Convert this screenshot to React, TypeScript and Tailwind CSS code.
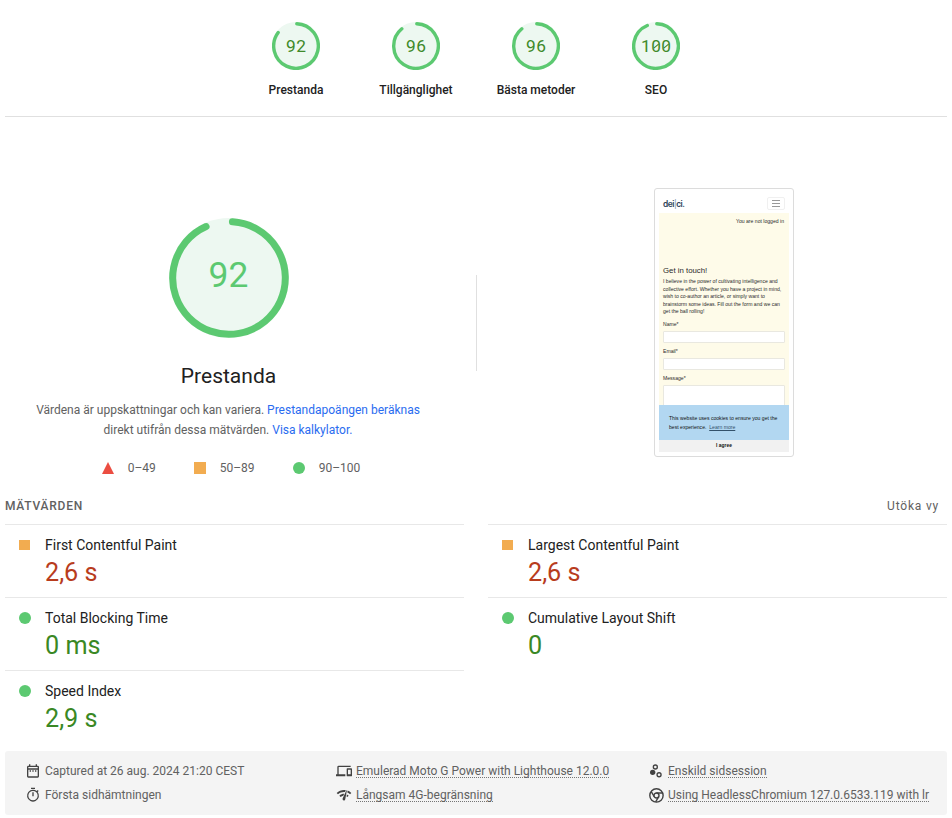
import React from "react";

const GREEN = "#5cc971";

type Arc = { size: number; r: number; stroke: number; start: number; end: number };

function point(c: number, r: number, deg: number) {
  const a = ((deg - 90) * Math.PI) / 180;
  return `${(c + r * Math.cos(a)).toFixed(2)} ${(c + r * Math.sin(a)).toFixed(2)}`;
}

function Ring({ size, r, stroke, start, end }: Arc) {
  const c = size / 2;
  return (
    <svg width={size} height={size} className="block">
      <circle cx={c} cy={c} r={c} fill="#edf8f1" />
      <path
        d={`M${point(c, r, start)} A${r} ${r} 0 1 1 ${point(c, r, end)}`}
        fill="none"
        stroke={GREEN}
        strokeWidth={stroke}
        strokeLinecap="round"
      />
    </svg>
  );
}

const gauges = [
  { score: "92", label: "Prestanda", end: 307 },
  { score: "96", label: "Tillgänglighet", end: 320.5 },
  { score: "96", label: "Bästa metoder", end: 320.5 },
  { score: "100", label: "SEO", end: 337 },
];

function SmallGauge({ score, label, end }: { score: string; label: string; end: number }) {
  return (
    <div className="flex w-[120px] flex-col items-center">
      <div className="grid h-12 w-12 place-items-center">
        <div className="col-start-1 row-start-1">
          <Ring size={48} r={22.3} stroke={3.4} start={2} end={end} />
        </div>
        <div className="relative z-10 col-start-1 row-start-1 flex text-[17.3px] leading-[20px] text-[#3f8a2a]">
          {score.split("").map((d, i) => (
            <span key={i} className="relative block w-[10.2px] text-center">
              <span className="-mx-1 block">{d}</span>
              {score === "100" && (
                <svg className="absolute left-0 top-0" width="10.2" height="20" stroke="#3f8a2a" strokeWidth="1.1">
                  {d === "0" ? <path d="M2.8 12.2 7.6 8.2" /> : null}
                </svg>
              )}
            </span>
          ))}
        </div>
      </div>
      <div className="mt-[10px] whitespace-nowrap text-[12px] font-medium leading-5 text-[#212121]">{label}</div>
    </div>
  );
}

function Shape({ kind }: { kind: "fail" | "average" | "pass" }) {
  if (kind === "fail")
    return (
      <svg width="12" height="12" className="block">
        <path d="M6 0 12 12H0z" fill="#eb4d41" />
      </svg>
    );
  if (kind === "average") return <div className="h-3 w-3 bg-[#f2ac50]" />;
  return <div className="h-3 w-3 rounded-full bg-[#5cc971]" />;
}

type MetricProps = { name: string; value: string; kind: "average" | "pass" };

function Metric({ name, value, kind }: MetricProps) {
  return (
    <div className="flex h-[73px] border-t border-[#e8e8e8] pl-[14px] pt-[10px]">
      <div className="flex h-5 w-[26px] items-center">
        {kind === "average" ? <div className="h-[10px] w-[11px] bg-[#f2ac50]" /> : <Shape kind="pass" />}
      </div>
      <div>
        <div className="text-[14px] leading-5 text-[#212121]">{name}</div>
        <div
          className={`mt-[2px] text-[25.2px] leading-8 ${kind === "average" ? "text-[#b83c1d]" : "text-[#3a8824]"}`}
        >
          {value}
        </div>
      </div>
    </div>
  );
}

const icons: Record<string, React.ReactNode> = {
  date: (
    <path d="M7 11h2v2H7v-2zm14-5v14a2 2 0 01-2 2H5a2 2 0 01-2-2l.01-14c0-1.1.88-2 1.99-2h1V2h2v2h8V2h2v2h1a2 2 0 012 2zM5 8h14V6H5v2zm14 12V10H5v10h14zm-4-7h2v-2h-2v2zm-4 0h2v-2h-2v2z" />
  ),
  watch: (
    <path d="M15 1H9v2h6V1zm-4 13h2V8h-2v6zm8.03-6.61l1.42-1.42c-.43-.51-.9-.99-1.41-1.41l-1.42 1.42A8.96 8.96 0 0012 4a9 9 0 107.03 3.39zM12 20a7 7 0 110-14 7 7 0 010 14z" />
  ),
  devices: (
    <path d="M4 6h18V4H4a2 2 0 00-2 2v11H0v3h14v-3H4V6zm19 2h-6a1 1 0 00-1 1v10c0 .55.45 1 1 1h6c.55 0 1-.45 1-1V9c0-.55-.45-1-1-1zm-1 9h-4v-7h4v7z" />
  ),
  network: (
    <path d="M15.9 5c-.2 0-.3 0-.4.2v.2L10.1 17a2 2 0 00-.2 1 2 2 0 004 .4l2.4-12.9c0-.3-.2-.5-.4-.5zM1 9l2 2c2.9-2.9 6.8-4 10.5-3.6l1.2-2.7C10 3.8 4.7 5.3 1 9zm20 2l2-2a15.4 15.4 0 00-5.6-3.6L17 8.2c1.5.7 2.9 1.6 4.1 2.8zm-4 4l2-2a9.9 9.9 0 00-2.7-1.9l-.5 3 1.2.9zM5 13l2 2a7.1 7.1 0 014-2l1.3-2.9C9.7 10.1 7 11 5 13z" />
  ),
  samples: (
    <>
      <circle cx="7" cy="14" r="4" />
      <path d="M11 10a4 4 0 110-8 4 4 0 010 8zm0-6a2 2 0 100 4 2 2 0 000-4zm5.6 17.6a4 4 0 110-8 4 4 0 010 8zm0-6a2 2 0 100 4 2 2 0 000-4z" />
    </>
  ),
  chrome: (
    <g fill="none" stroke="currentColor" strokeWidth="2.1" transform="translate(0.7 0.7)">
      <circle cx="12" cy="12" r="10" />
      <circle cx="12" cy="12" r="3.8" />
      <path d="M12 8.2h9M8.7 13.9 4.2 6.2M15.3 13.9 10.8 21.6" />
    </g>
  ),
};

function Info({ icon, text, link }: { icon: string; text: string; link?: boolean }) {
  return (
    <div className="flex h-6 items-center">
      <svg
        width="16"
        height="16"
        viewBox="0 0 24 24"
        fill="currentColor"
        className="mr-1 shrink-0 overflow-visible text-[#424242]"
      >
        {icons[icon]}
      </svg>
      <span
        className={
          link
            ? "h-[13px] whitespace-nowrap border-b border-dotted border-[#757575] text-[12px] leading-[12px]"
            : "h-[13px] whitespace-nowrap text-[12px] leading-[12px]"
        }
      >
        {text}
      </span>
    </div>
  );
}

function Preview() {
  return (
    <div className="h-[269px] w-[140px] rounded-[3px] border border-[#dcdcdc] bg-white px-1 pt-1 font-['Liberation_Sans',Arial,sans-serif] text-[5.1px] text-[#2a2a2a]">
      <div className="flex h-5 items-center justify-between pl-1 pr-1">
        <span className="pt-px font-[Inter,sans-serif] text-[8.4px] font-semibold leading-[10px] tracking-[-0.5px] text-[#2c4257]">
          dei<span className="font-normal text-[#7690a5]">|</span>ci.
        </span>
        <div className="flex h-[13px] w-[18px] flex-col items-center justify-center gap-[2px] rounded-[2px] border border-[#f0f0f0]">
          <div className="h-px w-[8px] bg-[#999]" />
          <div className="h-px w-[8px] bg-[#999]" />
          <div className="h-px w-[8px] bg-[#999]" />
        </div>
      </div>
      <div className="h-[192px] overflow-hidden bg-[#fefbe9] px-1 pt-1">
        <div className="pr-px text-right leading-[8px]">You are not logged in</div>
        <div className="mt-10 text-[7.8px] leading-[11px]">Get in touch!</div>
        <div className="mt-[2px] whitespace-nowrap leading-[7.6px]">
          I believe in the power of cultivating intelligence and
          <br />
          collective effort. Whether you have a project in mind,
          <br />
          wish to co-author an article, or simply want to
          <br />
          brainstorm some ideas. Fill out the form and we can
          <br />
          get the ball rolling!
        </div>
        <div className="mt-1 leading-[8px]">Name*</div>
        <div className="mt-[3px] h-3 rounded-[1px] border border-[#e9e8e0] bg-white" />
        <div className="mt-1 leading-[8px]">Email*</div>
        <div className="mt-[3px] h-3 rounded-[1px] border border-[#e9e8e0] bg-white" />
        <div className="mt-1 leading-[8px]">Message*</div>
        <div className="mt-[3px] h-8 rounded-[1px] border border-[#e9e8e0] bg-white" />
      </div>
      <div className="h-[35px] whitespace-nowrap bg-[#b2d7f1] pl-[10px] pt-[9px] leading-[8.5px] text-[#111]">
        This website uses cookies to ensure you get the
        <br />
        best experience. &nbsp;<span className="text-[#33516a] underline">Learn more</span>
      </div>
      <div className="h-3 bg-[#f1f1f1] text-center text-[4.9px] font-bold leading-[12px] text-[#111]">I agree</div>
    </div>
  );
}

export default function App() {
  return (
    <div className="h-[818px] w-[952px] overflow-hidden bg-white px-[5px] font-[Roboto,sans-serif] text-[#616161]">
      <header className="flex h-[117px] justify-center border-b border-[#e0e0e0] pt-[22px]">
        {gauges.map((g) => (
          <SmallGauge key={g.label} {...g} />
        ))}
      </header>

      <section className="flex h-[379px]">
        <div className="flex w-[447px] flex-col items-center pt-[101px]">
          <div className="grid h-[120px] w-[120px] place-items-center">
            <div className="col-start-1 row-start-1">
              <Ring size={120} r={56.3} stroke={7} start={3.5} end={336} />
            </div>
            <div className="z-10 col-start-1 row-start-1 -mt-[7px] text-[35.4px] leading-10 text-[#5cc971]">92</div>
          </div>
          <h1 className="mt-6 text-[21px] leading-7 text-[#212121]">Prestanda</h1>
          <p className="mt-[10px] whitespace-nowrap pr-px text-center text-[12px] leading-5">
            Värdena är uppskattningar och kan variera. <a className="text-[#2a6cf0]">Prestandapoängen beräknas</a>
            <br />
            direkt utifrån dessa mätvärden. <a className="text-[#2a6cf0]">Visa kalkylator.</a>
          </p>
          <div className="ml-[5px] mt-[18px] flex text-[12px] leading-5">
            <div className="flex w-[92px] items-center gap-[14px]">
              <Shape kind="fail" /> 0–49
            </div>
            <div className="flex w-[99px] items-center gap-[14px]">
              <Shape kind="average" /> 50–89
            </div>
            <div className="flex items-center gap-[14px]">
              <Shape kind="pass" /> 90–100
            </div>
          </div>
        </div>
        <div className="ml-6 mt-[158px] h-24 w-px bg-[#e0e0e0]" />
        <div className="ml-[177px] pt-[71px]">
          <Preview />
        </div>
      </section>

      <div className="flex h-7 justify-between pr-2 text-[12px] leading-5">
        <h2 className="font-medium tracking-[0.75px]">MÄTVÄRDEN</h2>
        <span className="tracking-[0.8px]">Utöka vy</span>
      </div>
      <section className="flex h-[227px] gap-6">
        <div className="w-[459px]">
          <Metric name="First Contentful Paint" value="2,6 s" kind="average" />
          <Metric name="Total Blocking Time" value="0 ms" kind="pass" />
          <Metric name="Speed Index" value="2,9 s" kind="pass" />
        </div>
        <div className="w-[459px]">
          <Metric name="Largest Contentful Paint" value="2,6 s" kind="average" />
          <Metric name="Cumulative Layout Shift" value="0" kind="pass" />
        </div>
      </section>

      <footer className="flex h-16 rounded-[3px] bg-[#f4f4f4] pl-5 pt-2">
        <div className="w-[311px]">
          <Info icon="date" text="Captured at 26 aug. 2024 21:20 CEST" />
          <Info icon="watch" text="Första sidhämtningen" />
        </div>
        <div className="w-[312px]">
          <Info icon="devices" text="Emulerad Moto G Power with Lighthouse 12.0.0" link />
          <Info icon="network" text="Långsam 4G-begränsning" link />
        </div>
        <div>
          <Info icon="samples" text="Enskild sidsession" link />
          <Info icon="chrome" text="Using HeadlessChromium 127.0.6533.119 with lr" link />
        </div>
      </footer>
    </div>
  );
}
